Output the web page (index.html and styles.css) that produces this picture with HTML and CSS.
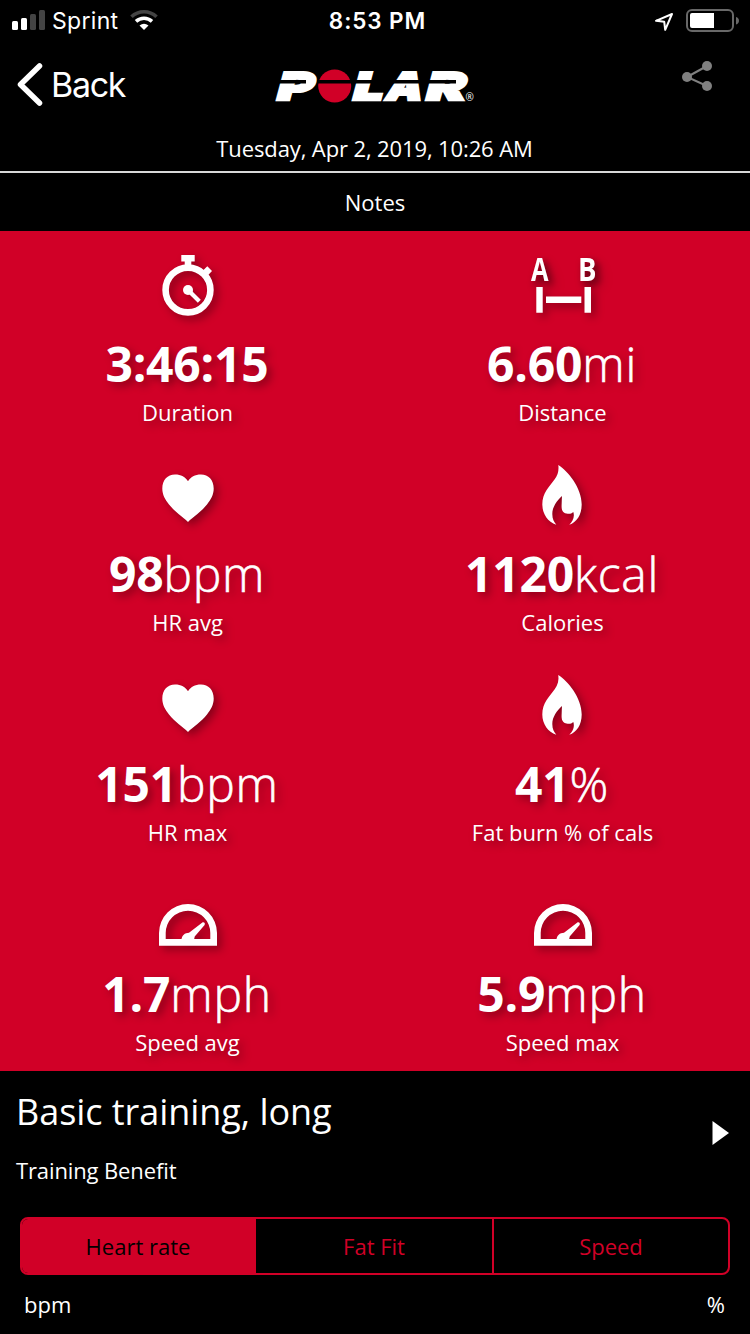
FILE: index.html
```html
<!DOCTYPE html>
<html lang="en">
<head>
  <meta charset="UTF-8">
  <title>Training session</title>
  <meta name="viewport" content="width=device-width, initial-scale=1">
  <link rel="stylesheet" href="styles.css">
</head>
<body>
  <!-- Icon shapes used more than once -->
  <svg class="defs" width="0" height="0">
    <symbol id="heart" viewBox="0 0 75 102">
      <path d="M38 81C33 76 25 71 19 63.500C15 58.500 12.300 53.500 12.300 47.500C12.300 39 17.500 33.500 25 33.500C31 33.500 35.500 36 38 40.300C40.500 36 45 33.500 51 33.500C58.500 33.500 63.700 39 63.700 47.500C63.700 53.500 61 58.500 57 63.500C51 71 43 76 38 81Z"/>
    </symbol>
    <symbol id="flame" viewBox="0 0 75 102">
      <path d="M33.300 24C43 30 56.700 47 56.700 63.500C56.700 74 51.500 81.500 44.300 83.700C47.500 81 50 76 48.300 71C46.500 73 44 73 41.500 72.600C36 71.500 36.500 66 36.700 62C36.700 59.500 36.900 57 37 55C32 59.500 27.300 66 27.300 73C27.300 78 29 81 31.300 83.700C23 81 17.300 73 17.300 63.500C17.300 52 24 46 29.500 38.500C33 34 34 29 33.300 24Z"/>
    </symbol>
    <symbol id="gauge" viewBox="0 0 75 102">
      <path fill-rule="evenodd" d="M9 84.700V72A29 29 0 0 1 67 72V84.700ZM15.700 78H60.300V72A22.300 22.300 0 0 0 15.700 72Z"/>
      <path d="M31.500 79C31.500 74.500 35 71.700 39 71.700L52.700 61.300Q55.500 61 54.600 64L44.700 75.500L44 79Z"/>
    </symbol>
  </svg>

  <!-- Status bar -->
  <div class="status">
    <div class="status-left">
      <svg class="signal" width="34" height="20" viewBox="0 0 34 20">
        <rect x="0" y="11" width="6" height="9" rx="1.500" fill="#fff"/>
        <rect x="9" y="8" width="6" height="12" rx="1.500" fill="#fff"/>
        <rect x="18" y="4" width="6" height="16" rx="1.500" fill="#444"/>
        <rect x="27" y="0" width="6" height="20" rx="1.500" fill="#444"/>
      </svg>
      <span class="carrier">Sprint</span>
      <svg class="wifi" width="28" height="20" viewBox="0 0 28 20" fill="none">
        <path d="M1.500 6.800A18 18 0 0 1 26.500 6.800" stroke="#444" stroke-width="3.600"/>
        <path d="M6 11.300A12 12 0 0 1 22 11.300" stroke="#fff" stroke-width="3.600"/>
        <path d="M9.500 15.600Q14 11.800 18.500 15.600L14 20Z" fill="#fff"/>
      </svg>
    </div>
    <div class="time">8:53 PM</div>
    <div class="status-right">
      <svg width="20" height="20" viewBox="0 0 20 20">
        <path d="M2 9.800L18 3L11.200 18.800L10.200 10.700Z" fill="none" stroke="#fff" stroke-width="2" stroke-linejoin="round"/>
      </svg>
      <svg width="54" height="24" viewBox="0 0 54 24">
        <rect x="1" y="1" width="46" height="21" rx="5" fill="none" stroke="#686868" stroke-width="2"/>
        <path d="M6 4H28V19H6Q4 19 4 17V6Q4 4 6 4Z" fill="#fff"/>
        <path d="M50 8Q53 9 53 11.700T50 15.500Z" fill="#686868"/>
      </svg>
    </div>
  </div>

  <!-- Navigation -->
  <div class="nav">
    <div class="back">
      <svg width="28" height="44" viewBox="0 0 28 44">
        <path d="M23.500 4L4.500 22.500L23.500 41" fill="none" stroke="#fff" stroke-width="5.500" stroke-linecap="round" stroke-linejoin="round"/>
      </svg>
      <span>Back</span>
    </div>
    <svg class="logo" width="204" height="36" viewBox="0 0 204 36">
      <g class="logo-text" transform="translate(0 31.700) skewX(-15)">
        <text x="0" y="0" textLength="36" lengthAdjust="spacingAndGlyphs">P</text>
        <text x="76" y="0" textLength="30" lengthAdjust="spacingAndGlyphs">L</text>
        <text x="109" y="0" textLength="36" lengthAdjust="spacingAndGlyphs">A</text>
        <text x="149" y="0" textLength="39" lengthAdjust="spacingAndGlyphs">R</text>
      </g>
      <circle cx="59.700" cy="18" r="16.500" fill="#d10027"/>
      <path d="M0 13.800H31M42 13.800H181" stroke="#000" stroke-width="3.600"/>
      <text class="reg" x="190.500" y="33">®</text>
    </svg>
    <svg class="share" width="32" height="32" viewBox="0 0 32 32">
      <path d="M26 6L6 17L26 26" fill="none" stroke="#808080" stroke-width="2"/>
      <circle cx="26" cy="6" r="5" fill="#808080"/>
      <circle cx="6" cy="17" r="5" fill="#808080"/>
      <circle cx="26" cy="26" r="5" fill="#808080"/>
    </svg>
  </div>

  <div class="date">Tuesday, Apr 2, 2019, 10:26 AM</div>
  <div class="notes">Notes</div>

  <!-- Session values -->
  <div class="stats">
    <div class="stat">
      <svg class="icon" viewBox="0 0 75 102">
        <circle cx="38" cy="59" r="22.400" fill="none" stroke="#fff" stroke-width="6.600"/>
        <path d="M31.300 24H44.700V30.600H41.300V36H34.700V30.600H31.300ZM57.300 35.300L62 40L57.300 45L52.500 40Z"/>
        <circle cx="38" cy="59" r="5"/>
        <path d="M38 59L49.300 70.300" stroke="#fff" stroke-width="4.200"/>
      </svg>
      <div class="value"><b>3:46:15</b></div>
      <div class="label">Duration</div>
    </div>
    <div class="stat">
      <svg class="icon" viewBox="0 0 75 102">
        <text x="6" y="50" textLength="17.500" lengthAdjust="spacingAndGlyphs">A</text>
        <text x="53" y="50" textLength="18.500" lengthAdjust="spacingAndGlyphs">B</text>
        <path d="M11.300 56H17.700V81.700H11.300ZM59.500 56H66V81.700H59.500ZM21 65.500H56.300V72H21Z"/>
      </svg>
      <div class="value"><b>6.60</b>mi</div>
      <div class="label">Distance</div>
    </div>
    <div class="stat">
      <svg class="icon"><use href="#heart"/></svg>
      <div class="value"><b>98</b>bpm</div>
      <div class="label">HR avg</div>
    </div>
    <div class="stat">
      <svg class="icon"><use href="#flame"/></svg>
      <div class="value"><b>1120</b>kcal</div>
      <div class="label">Calories</div>
    </div>
    <div class="stat">
      <svg class="icon"><use href="#heart"/></svg>
      <div class="value"><b>151</b>bpm</div>
      <div class="label">HR max</div>
    </div>
    <div class="stat">
      <svg class="icon"><use href="#flame"/></svg>
      <div class="value"><b>41</b>%</div>
      <div class="label">Fat burn % of cals</div>
    </div>
    <div class="stat">
      <svg class="icon"><use href="#gauge"/></svg>
      <div class="value"><b>1.7</b>mph</div>
      <div class="label">Speed avg</div>
    </div>
    <div class="stat">
      <svg class="icon"><use href="#gauge"/></svg>
      <div class="value"><b>5.9</b>mph</div>
      <div class="label">Speed max</div>
    </div>
  </div>

  <!-- Training benefit -->
  <div class="benefit">
    <div class="benefit-text">
      <div class="benefit-title">Basic training, long</div>
      <div class="benefit-sub">Training Benefit</div>
    </div>
    <svg width="17" height="24" viewBox="0 0 17 24">
      <path d="M0.500 0L17 12L0.500 24Z" fill="#fff"/>
    </svg>
  </div>

  <div class="tabs">
    <div class="tab active">Heart rate</div>
    <div class="tab">Fat Fit</div>
    <div class="tab">Speed</div>
  </div>

  <div class="axis">
    <span>bpm</span>
    <span>%</span>
  </div>
</body>
</html>
```

FILE: styles.css
```css
* { box-sizing: border-box; }
body {
  margin: 0;
  height: 1334px;
  overflow: hidden;
  background: #000;
  color: #fff;
  font-family: "Open Sans", "Noto Sans", sans-serif;
  font-size: 22px;
  line-height: 30px;
}
svg { display: block; flex: none; overflow: visible; }
.defs { position: absolute; }

/* status bar */
.status {
  display: grid;
  grid-template-columns: 1fr auto 1fr;
  align-items: center;
  height: 40px;
  padding: 0 10px 0 12px;
  font-family: Inter, "Liberation Sans", sans-serif;
}
.status-left, .status-right { display: flex; align-items: center; }
.status-right { justify-content: flex-end; gap: 12px; padding-top: 1px; }
.carrier { margin: 0 12px 0 6px; padding-top: 2px; font-size: 23px; letter-spacing: 0.3px; }
.time { padding: 2px 0 0 3px; font-size: 22.5px; font-weight: 600; letter-spacing: 0.9px; }

/* navigation */
.nav {
  display: grid;
  grid-template-columns: 1fr auto 1fr;
  align-items: center;
  height: 94px;
  padding: 0 16px 6px;
}
.back {
  display: flex;
  align-items: center;
  gap: 7px;
  font-family: Inter, "Liberation Sans", sans-serif;
  font-size: 34px;
  letter-spacing: -1.3px;
}
.back span { padding-top: 1px; }
.logo { margin: 4px 0 0 4px; }
.logo-text {
  font-family: Inter, sans-serif;
  font-size: 38px;
  font-weight: 900;
  fill: #fff;
  stroke: #fff;
  stroke-width: 2.6px;
}
.reg { font-family: "Open Sans", sans-serif; font-size: 10px; fill: #fff; }
.share { justify-self: end; margin: 0 21px 17px 0; }

.date {
  height: 39px;
  padding-right: 1px;
  border-bottom: 2px solid #d8d8d8;
  line-height: 28px;
  letter-spacing: -0.12px;
  text-align: center;
}
.notes { height: 58px; line-height: 58px; text-align: center; }

/* values */
.stats {
  display: grid;
  grid-template-columns: 1fr 1fr;
  grid-auto-rows: 210px;
  background: #d10027;
}
.stat {
  display: flex;
  flex-direction: column;
  align-items: center;
  text-shadow: 4px 4px 8px rgba(0, 0, 0, 0.35);
}
.icon {
  width: 75px;
  height: 102px;
  fill: #fff;
  font-size: 32px;
  font-weight: 700;
  filter: drop-shadow(4px 4px 4px rgba(0, 0, 0, 0.35));
}
.value {
  margin-right: 1px;
  font-size: 48px;
  font-weight: 300;
  line-height: 62px;
  letter-spacing: 0.7px;
  -webkit-text-stroke: 0.6px #fff;
}
.value b {
  font-weight: 700;
  letter-spacing: -0.2px;
  -webkit-text-stroke: 0;
}
.label { margin-top: 2px; }

/* training benefit */
.benefit {
  display: flex;
  justify-content: space-between;
  align-items: center;
  height: 124px;
  padding: 0 21px 0 16px;
}
.benefit-text { padding-top: 6px; }
.benefit-title { font-size: 36px; line-height: 50px; letter-spacing: -0.05px; }
.benefit-sub { margin-top: 18px; letter-spacing: -0.12px; }

.tabs {
  display: grid;
  grid-template-columns: 234px 238px 1fr;
  height: 58px;
  margin: 22px 20px 0;
  border: 2px solid #d10027;
  border-radius: 8px;
  overflow: hidden;
  color: #d10027;
  line-height: 54px;
  text-align: center;
}
.tab { border-right: 2px solid #d10027; }
.tab:last-child { border-right: 0; }
.tab.active { background: #d10027; color: #000; }

.axis {
  display: flex;
  justify-content: space-between;
  padding: 14px 25px 0 24px;
}
```
